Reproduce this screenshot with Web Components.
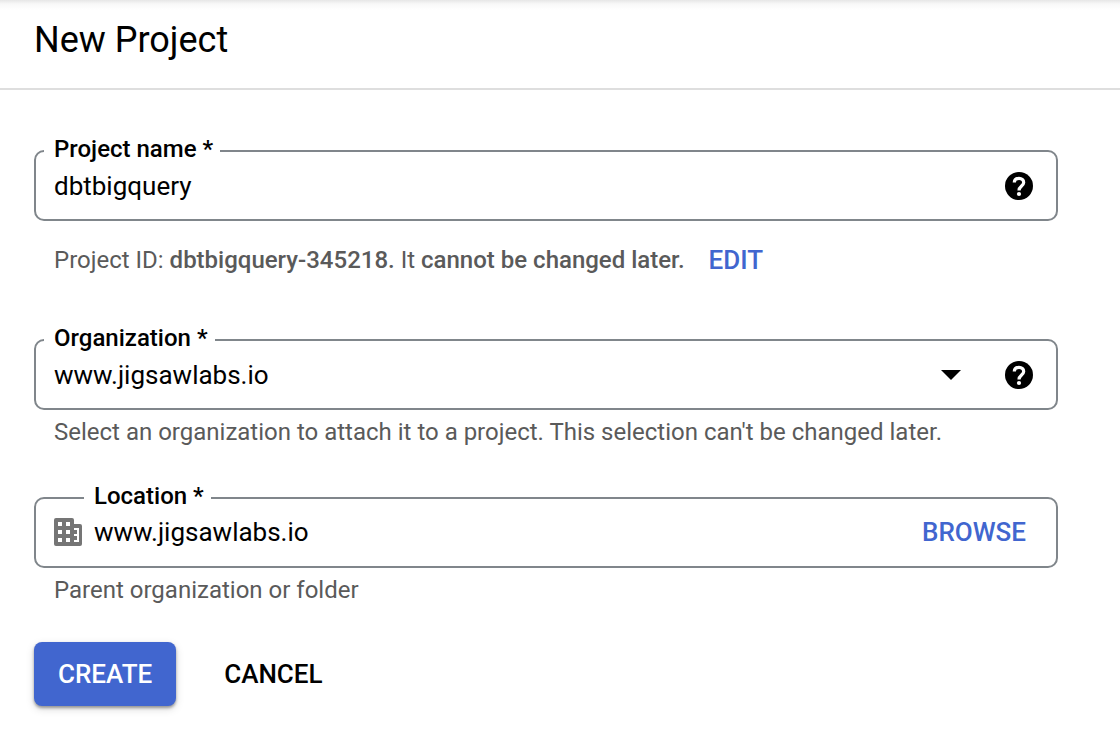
<!DOCTYPE html>
<html lang="en">
<head>
<meta charset="utf-8">
<title>New Project</title>
<style>
  body {
    margin: 0;
    background: #fff;
    color: #000;
    font-family: Roboto, "Liberation Sans", sans-serif;
    --accent: #4166cf;
    --outline: #80868b;
    --muted: #5a5a5a;
  }
</style>
</head>
<body>
<project-page heading="New Project">
  <outlined-field label="Project name *" value="dbtbigquery">
    <help-button slot="suffix" label="About the project name"></help-button>
  </outlined-field>
  <project-id slot="id" value="dbtbigquery-345218"></project-id>
  <outlined-field slot="organization" kind="select" label="Organization *" value="www.jigsawlabs.io">
    <help-button slot="suffix" label="About organizations"></help-button>
    <span slot="hint">Select an organization to attach it to a project. This selection can't be changed later.</span>
  </outlined-field>
  <outlined-field slot="location" leading label="Location *" value="www.jigsawlabs.io">
    <building-icon slot="prefix"></building-icon>
    <action-button slot="suffix" tone="link">BROWSE</action-button>
    <span slot="hint">Parent organization or folder</span>
  </outlined-field>
  <action-button slot="actions" tone="primary">CREATE</action-button>
  <action-button slot="actions" tone="plain">CANCEL</action-button>
</project-page>

<script>
class BaseElement extends HTMLElement {
  constructor() {
    super();
    this.attachShadow({ mode: 'open' });
  }
  connectedCallback() {
    this.shadowRoot.innerHTML = this.render();
  }
}

customElements.define('project-page', class extends BaseElement {
  render() {
    return `
      <style>
        :host { display: block; }
        header {
          box-sizing: border-box;
          height: 90px;
          padding: 18px 34px;
          border-bottom: 2px solid #dedede;
          background: linear-gradient(#e6e6e6, #f8f8f8 4px, #fff 10px);
        }
        h1 { margin: 0; font-size: 36px; line-height: 44px; font-weight: 400; }
        form { display: flex; flex-direction: column; padding: 47px 62px 24px 34px; }
        .id { margin-bottom: 52px; }
        .organization, .location { margin-bottom: 38px; }
        .actions { display: flex; gap: 24px; }
      </style>
      <header><h1>${this.getAttribute('heading')}</h1></header>
      <form>
        <slot></slot>
        <div class="id"><slot name="id"></slot></div>
        <div class="organization"><slot name="organization"></slot></div>
        <div class="location"><slot name="location"></slot></div>
        <div class="actions"><slot name="actions"></slot></div>
      </form>`;
  }
});

customElements.define('outlined-field', class extends BaseElement {
  render() {
    const value = this.getAttribute('value');
    const control = this.getAttribute('kind') === 'select'
      ? `<div class="picker">
           <select id="control"><option>${value}</option></select>
           <svg viewBox="0 0 20 10" aria-hidden="true"><path d="M0 0h20L10 10z"/></svg>
         </div>`
      : `<input id="control" type="text" value="${value}">`;
    return `
      <style>
        :host { display: block; }
        fieldset {
          min-width: 0;
          margin: 0;
          padding: 0 23px 12px 8px;
          border: 2px solid var(--outline);
          border-radius: 10px;
        }
        legend { padding: 0 7px 4px 10px; font-size: 24px; line-height: 24px; font-weight: 500; }
        label { display: block; }
        .row { display: flex; align-items: center; height: 42px; padding-left: 10px; }
        input, select {
          flex: 1;
          min-width: 0;
          width: 100%;
          height: 40px;
          margin: 0;
          padding: 0;
          border: 0;
          outline: 0;
          background: none;
          color: inherit;
          font: 400 26px/40px Roboto, "Liberation Sans", sans-serif;
          appearance: none;
        }
        .picker { flex: 1; display: grid; align-items: center; margin-right: 44px; }
        .picker > * { grid-area: 1 / 1; }
        .picker svg { width: 20px; height: 10px; justify-self: end; pointer-events: none; }
        .hint { padding: 8px 20px 0; color: var(--muted); font-size: 24px; line-height: 28px; }
        .hint:not(.shown) { display: none; }
        :host([leading]) legend { margin-left: 40px; }
        :host([leading]) fieldset { padding-right: 30px; padding-bottom: 14px; }
        :host([leading]) .row { gap: 12px; height: 40px; }
      </style>
      <fieldset>
        <legend><label for="control">${this.getAttribute('label')}</label></legend>
        <div class="row"><slot name="prefix"></slot>${control}<slot name="suffix"></slot></div>
      </fieldset>
      <div class="hint ${this.querySelector('[slot=hint]') ? 'shown' : ''}"><slot name="hint"></slot></div>`;
  }
});

customElements.define('project-id', class extends BaseElement {
  render() {
    return `
      <style>
        :host {
          display: flex;
          align-items: center;
          gap: 24px;
          padding: 25px 20px 0;
          color: var(--muted);
          font-size: 24px;
          line-height: 28px;
        }
        p { margin: 0; }
        b { font-weight: 500; }
      </style>
      <p>Project ID: <b>${this.getAttribute('value')}.</b> It <b>cannot be changed later.</b></p>
      <action-button tone="link">EDIT</action-button>`;
  }
});

customElements.define('help-button', class extends BaseElement {
  render() {
    return `
      <style>
        :host { display: block; }
        button { display: block; padding: 0; border: 0; background: none; color: inherit; }
        svg { display: block; width: 28px; height: 28px; }
      </style>
      <button type="button" aria-label="${this.getAttribute('label')}">
        <svg viewBox="0 0 28 28" aria-hidden="true">
          <circle cx="14" cy="14" r="14"/>
          <path fill="none" stroke="#fff" stroke-width="3.2" d="M9.3 10.6C9.3 8 11.2 6.4 14 6.4s4.7 1.6 4.7 4.1c0 3.4-4.7 3.6-4.7 7.9"/>
          <circle cx="14" cy="22" r="2.1" fill="#fff"/>
        </svg>
      </button>`;
  }
});

customElements.define('building-icon', class extends BaseElement {
  render() {
    return `
      <style>
        :host { display: block; }
        svg { display: block; width: 28px; height: 28px; }
      </style>
      <svg viewBox="0 0 28 28" aria-hidden="true">
        <path fill="#757575" d="M2 0h16q2 0 2 2v4h6q2 0 2 2v18q0 2-2 2H2q-2 0-2-2V2q0-2 2-2z"/>
        <path fill="#fff" d="M4 4h4v4H4zM12 4h4v4h-4zM4 12h4v4H4zM12 12h4v4h-4zM4 20h4v4H4zM12 20h4v4h-4zM20 10h5v14h-5v-2h3v-4h-3v-2h3v-4h-3z"/>
      </svg>`;
  }
});

customElements.define('action-button', class extends BaseElement {
  render() {
    return `
      <style>
        :host { display: block; }
        button {
          display: block;
          padding: 0;
          border: 0;
          border-radius: 8px;
          background: none;
          color: #000;
          font: 500 26px/28px Roboto, "Liberation Sans", sans-serif;
        }
        :host([tone="link"]) button { color: var(--accent); }
        :host([tone="plain"]) button, :host([tone="primary"]) button { padding: 18px 24px; }
        :host([tone="primary"]) button {
          background: var(--accent);
          color: #fff;
          box-shadow: 0 2px 3px rgba(0, 0, 0, .35), 0 3px 8px rgba(0, 0, 0, .15);
        }
      </style>
      <button type="button"><slot></slot></button>`;
  }
});
</script>
</body>
</html>
